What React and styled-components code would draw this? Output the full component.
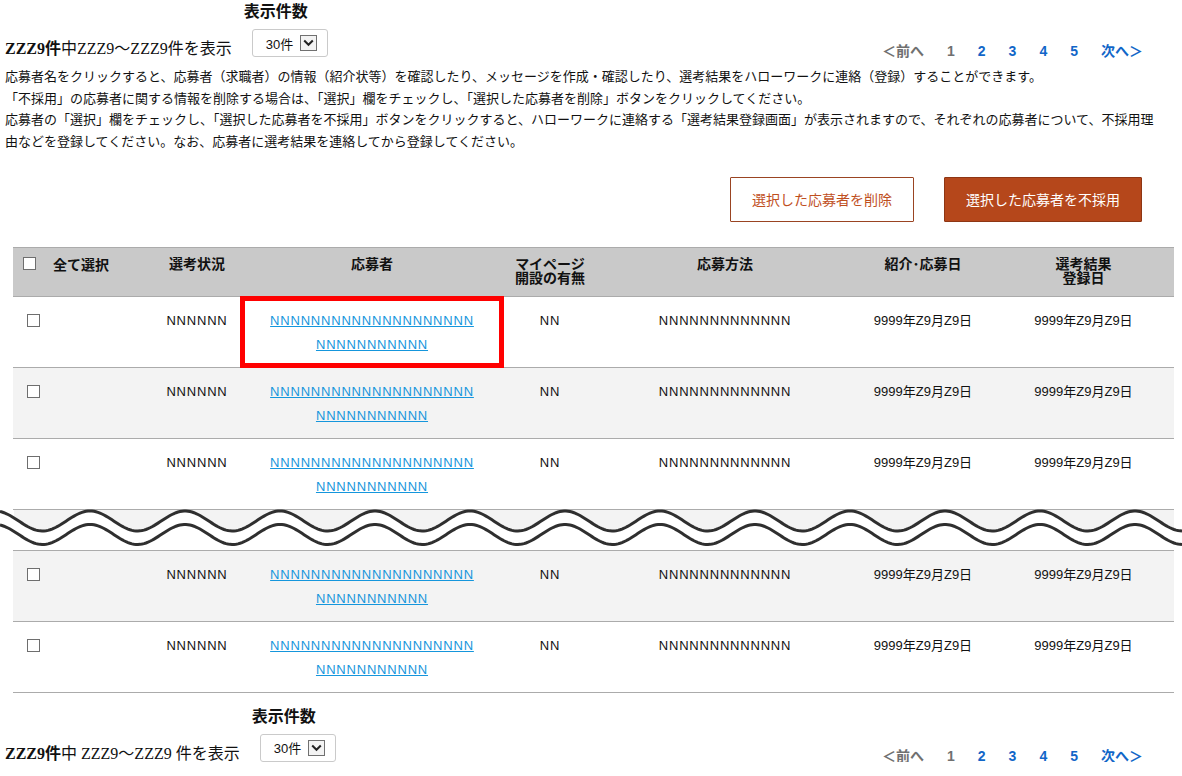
import React from 'react'
import styled, { createGlobalStyle } from 'styled-components'

const SANS = `"Liberation Sans", "Noto Sans CJK JP", sans-serif`
const SERIF = `"Liberation Serif", "Noto Sans CJK JP", serif`

const GlobalStyle = createGlobalStyle`
  body {
    margin: 0;
    background: #fff;
    color: #111;
    font-family: ${SANS};
  }
`

const Page = styled.div`
  width: 1182px;
`

const PagerBar = styled.div`
  display: flex;
  align-items: flex-end;
  padding: 2px 39px 0 5px;
  margin-top: ${p => p.$top || 0}px;
`

const Count = styled.div`
  font-family: ${SERIF};
  font-size: 16px;
  line-height: 16px;
  white-space: pre;
  b { font-weight: bold; }
`

const PerPage = styled.div`
  display: flex;
  flex-direction: column;
  margin-left: 12px;
`

const PerPageLabel = styled.div`
  font-size: 16px;
  line-height: 20px;
  font-weight: bold;
`

const Select = styled.div`
  display: flex;
  align-items: center;
  gap: 7px;
  box-sizing: border-box;
  width: 76px;
  height: 28px;
  margin: 7px 0 0 8px;
  padding: 0 0 0 13px;
  border: 1px solid #cacaca;
  border-radius: 3px;
  background: #fff;
  font-size: 13px;
`

const ArrowBox = styled.span`
  display: flex;
  align-items: center;
  justify-content: center;
  box-sizing: border-box;
  width: 17px;
  height: 16px;
  border: 1px solid #707070;
  background: #f3f3f3;
`

const Pagination = styled.nav`
  display: flex;
  gap: 23px;
  margin-left: auto;
  font-size: 14px;
  line-height: 12px;
  font-weight: bold;
`

const PageLink = styled.span`
  color: ${p => (p.$muted ? '#707070' : '#1166c8')};
`

const Notes = styled.p`
  margin: 9px 0 0;
  padding-left: 5px;
  max-width: 1160px;
  font-size: 13px;
  line-height: 21.7px;
  color: #111;
`

const Actions = styled.div`
  display: flex;
  justify-content: flex-end;
  gap: 30px;
  margin-top: 24px;
  padding-right: 40px;
`

const ActionButton = styled.button`
  height: 45px;
  padding: 0 21px;
  font-family: ${SANS};
  font-size: 14px;
  border-radius: 1px;
  cursor: pointer;
  border: 1px solid ${p => (p.$primary ? '#8e3614' : '#9a4422')};
  background: ${p => (p.$primary ? '#b5471b' : '#fff')};
  color: ${p => (p.$primary ? '#fff' : '#bf4f1e')};
`

const COLS = '140px 88px 262px 94px 256px 140px 181px'

const Table = styled.div`
  margin: ${p => p.$top || 0}px 8px 0 13px;
  border-top: 1px solid #ababab;
`

const HeadRow = styled.div`
  display: grid;
  grid-template-columns: ${COLS};
  height: 48px;
  background: #c9c9c9;
  border-bottom: 1px solid #ababab;
`

const HeadCell = styled.div`
  padding-top: 9px;
  font-size: 14px;
  line-height: 14px;
  font-weight: bold;
  text-align: center;
  color: #111;
`

const SelectAll = styled.label`
  display: flex;
  align-items: center;
  gap: 17px;
  height: 14px;
  padding: 9px 0 0 10px;
  font-size: 14px;
  font-weight: bold;
`

const Row = styled.div`
  display: grid;
  grid-template-columns: ${COLS};
  height: 70px;
  background: ${p => (p.$alt ? '#f3f3f3' : '#fff')};
  border-bottom: 1px solid #ababab;
`

const Cell = styled.div`
  padding-top: 12px;
  font-size: 13px;
  line-height: 24px;
  text-align: center;
  color: #111;
  letter-spacing: ${p => (p.$spread ? '0.8px' : 'normal')};
  ${p => p.$marked && `
    outline: 5px solid #ff0000;
    outline-offset: -4px;
  `}
`

const CheckCell = styled.div`
  display: flex;
  align-items: center;
  height: 24px;
  padding: 12px 0 0 14px;
`

const Box = styled.input.attrs({ type: 'checkbox' })`
  appearance: none;
  box-sizing: border-box;
  width: 13px;
  height: 13px;
  margin: 0;
  border: 1px solid #6e6e6e;
  background: #fff;
`

const NameLink = styled.a`
  color: #1596dc;
  text-decoration: underline;
  cursor: pointer;
`

const WaveSvg = styled.svg`
  display: block;
  width: 1182px;
  height: 40px;
  overflow: visible;
`

const wave = (mid, from, to) => {
  let d = ''
  for (let x = from; x <= to; x += 2) {
    const y = mid - 10 * Math.cos((2 * Math.PI * (x - 90)) / 95)
    d += (x === from ? 'M' : 'L') + x + ' ' + y.toFixed(2) + ' '
  }
  return d
}

const Break = () => (
  <WaveSvg viewBox="0 0 1182 40">
    <path d={wave(11, 14, 1174) + 'L1174 0 L14 0 Z'} fill="#f3f3f3" />
    <path d={wave(11, 0, 1182)} fill="none" stroke="#2f2f2f" strokeWidth="3" />
    <path d={wave(24.5, 0, 1182)} fill="none" stroke="#2f2f2f" strokeWidth="3" />
  </WaveSvg>
)

const Pager = ({ count, top }) => (
  <PagerBar $top={top}>
    <Count>{count}</Count>
    <PerPage>
      <PerPageLabel>表示件数</PerPageLabel>
      <Select>
        <span>30件</span>
        <ArrowBox>
          <svg width="11" height="8" viewBox="0 0 11 8">
            <path d="M1.2 1.5 L5.5 5.8 L9.8 1.5" fill="none" stroke="#222" strokeWidth="2" />
          </svg>
        </ArrowBox>
      </Select>
    </PerPage>
    <Pagination>
      <PageLink $muted>＜前へ</PageLink>
      <PageLink $muted>1</PageLink>
      <PageLink>2</PageLink>
      <PageLink>3</PageLink>
      <PageLink>4</PageLink>
      <PageLink>5</PageLink>
      <PageLink>次へ＞</PageLink>
    </Pagination>
  </PagerBar>
)

const ApplicantRow = ({ alt, marked }) => (
  <Row $alt={alt}>
    <CheckCell><Box /></CheckCell>
    <Cell $spread>NNNNNN</Cell>
    <Cell $spread $marked={marked}>
      <NameLink>NNNNNNNNNNNNNNNNNNNN</NameLink>
      <br />
      <NameLink>NNNNNNNNNNN</NameLink>
    </Cell>
    <Cell $spread>NN</Cell>
    <Cell $spread>NNNNNNNNNNNNN</Cell>
    <Cell>9999年Z9月Z9日</Cell>
    <Cell>9999年Z9月Z9日</Cell>
  </Row>
)

export default function App() {
  return (
    <Page>
      <GlobalStyle />
      <Pager count={<><b>ZZZ9件</b>中ZZZ9～ZZZ9件を表示</>} />
      <Notes>
        応募者名をクリックすると、応募者（求職者）の情報（紹介状等）を確認したり、メッセージを作成・確認したり、選考結果をハローワークに連絡（登録）することができます。
        <br />
        「不採用」の応募者に関する情報を削除する場合は、「選択」欄をチェックし、「選択した応募者を削除」ボタンをクリックしてください。
        <br />
        応募者の「選択」欄をチェックし、「選択した応募者を不採用」ボタンをクリックすると、ハローワークに連絡する「選考結果登録画面」が表示されますので、それぞれの応募者について、不採用理由などを登録してください。なお、応募者に選考結果を連絡してから登録してください。
      </Notes>
      <Actions>
        <ActionButton>選択した応募者を削除</ActionButton>
        <ActionButton $primary>選択した応募者を不採用</ActionButton>
      </Actions>

      <Table $top={25}>
        <HeadRow>
          <SelectAll><Box />全て選択</SelectAll>
          <HeadCell>選考状況</HeadCell>
          <HeadCell>応募者</HeadCell>
          <HeadCell>マイページ<br />開設の有無</HeadCell>
          <HeadCell>応募方法</HeadCell>
          <HeadCell>紹介･応募日</HeadCell>
          <HeadCell>選考結果<br />登録日</HeadCell>
        </HeadRow>
        <ApplicantRow marked />
        <ApplicantRow alt />
        <ApplicantRow />
      </Table>
      <Break />
      <Table>
        <ApplicantRow alt />
        <ApplicantRow />
      </Table>

      <Pager top={12} count={<><b>ZZZ9件</b>中 ZZZ9～ZZZ9 件を表示</>} />
    </Page>
  )
}
